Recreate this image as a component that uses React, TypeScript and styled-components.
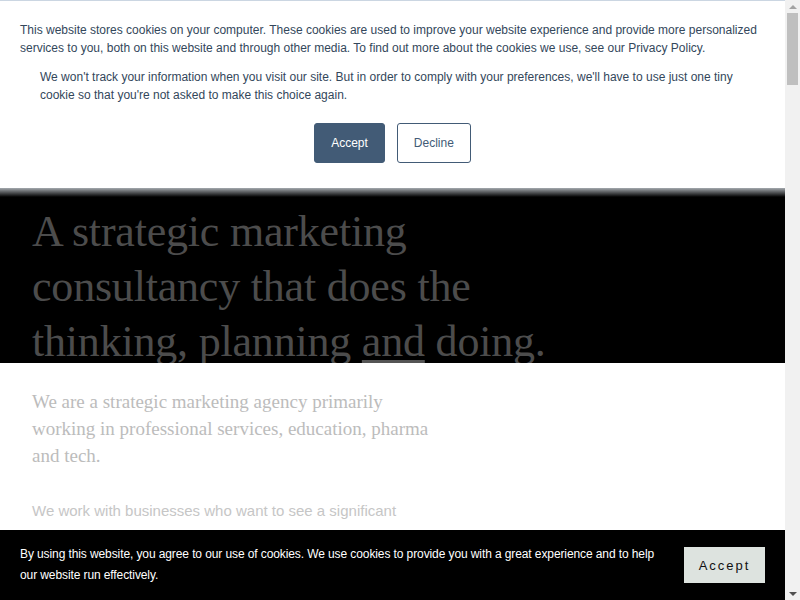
import React from 'react';
import styled, { createGlobalStyle } from 'styled-components';

const GlobalStyle = createGlobalStyle`
  html, body {
    margin: 0;
    padding: 0;
    background: #ffffff;
  }
  * { box-sizing: border-box; }
`;

const Page = styled.main`
  margin-right: 15px;
`;

const Hero = styled.section`
  background: #000;
  height: 363px;
  overflow: hidden;
  padding: 204px 32px 0;
`;

const Headline = styled.h1`
  margin: 0;
  max-width: 560px;
  font-family: 'Liberation Serif', 'Times New Roman', serif;
  font-weight: 400;
  font-size: 44px;
  line-height: 55px;
  color: #4c4c4c;
  letter-spacing: -0.2px;

  u {
    text-decoration: underline;
    text-decoration-thickness: 3px;
    text-underline-offset: 4px;
    text-decoration-color: #555;
  }
`;

const Intro = styled.section`
  padding: 25px 32px 0;
  min-height: 4350px;
`;

const Lead = styled.p`
  margin: 0;
  max-width: 410px;
  font-family: 'Liberation Serif', 'Times New Roman', serif;
  font-size: 19px;
  line-height: 27px;
  color: #bcbcbc;
`;

const Body = styled.p`
  margin: 28px 0 0;
  max-width: 410px;
  font-family: 'Liberation Sans', Arial, sans-serif;
  font-size: 15px;
  line-height: 28px;
  color: #c6c6c6;
`;

const Consent = styled.div`
  position: fixed;
  top: 0;
  left: 0;
  right: 15px;
  background: #fff;
  border-top: 1px solid #cbd6e2;
  padding: 20px 20px 25px;
  font-family: 'Liberation Sans', Arial, sans-serif;
  font-size: 12px;
  line-height: 18px;
  color: #33475b;
  z-index: 10;

  &::after {
    content: '';
    position: absolute;
    left: 0;
    right: 0;
    top: 100%;
    height: 9px;
    background: linear-gradient(#a4a9ae, rgba(0, 0, 0, 0));
  }
`;

const ConsentText = styled.p<{ $indent?: boolean }>`
  margin: ${p => (p.$indent ? '11px 20px 0' : '0')};
`;

const ConsentActions = styled.div`
  display: flex;
  justify-content: center;
  gap: 12px;
  margin-top: 19px;
`;

const ConsentButton = styled.button<{ $primary?: boolean }>`
  height: 40px;
  padding: 0 16px;
  border-radius: 3px;
  border: 1px solid #425b76;
  background: ${p => (p.$primary ? '#425b76' : '#fff')};
  color: ${p => (p.$primary ? '#fff' : '#425b76')};
  font-family: 'Liberation Sans', Arial, sans-serif;
  font-size: 12px;
  cursor: pointer;
`;

const CookieBar = styled.div`
  position: fixed;
  left: 0;
  right: 15px;
  bottom: 0;
  height: 70px;
  background: #000;
  display: flex;
  align-items: center;
  gap: 20px;
  padding: 0 20px;
  z-index: 10;
`;

const CookieText = styled.p`
  flex: 1;
  margin: 0;
  font-family: 'Liberation Sans', Arial, sans-serif;
  font-size: 12px;
  letter-spacing: -0.1px;
  line-height: 21px;
  color: #fff;
`;

const CookieAccept = styled.button`
  width: 81px;
  height: 36px;
  border: none;
  background: #dde3df;
  color: #111;
  font-family: 'Liberation Sans', Arial, sans-serif;
  font-size: 13px;
  letter-spacing: 2px;
  cursor: pointer;
`;

/* fake classic scrollbar, the page in the shot is scrolled to the top */
const Scrollbar = styled.div`
  position: fixed;
  top: 0;
  right: 0;
  width: 15px;
  height: 100vh;
  background: #f1f1f1;
  display: flex;
  flex-direction: column;
  align-items: center;
  z-index: 20;
`;

const Arrow = styled.div<{ $down?: boolean }>`
  height: 13px;
  width: 100%;
  display: flex;
  align-items: center;
  justify-content: center;
  margin-top: ${p => (p.$down ? 'auto' : '0')};
  &::before {
    content: '';
    border-left: 4px solid transparent;
    border-right: 4px solid transparent;
    ${p => (p.$down ? 'border-top: 4px solid #505050;' : 'border-bottom: 4px solid #a3a3a3;')}
  }
`;

const Thumb = styled.div`
  width: 11px;
  height: 72px;
  background: #bfbfbf;
`;

export default function App() {
  return (
    <>
      <GlobalStyle />
      <Page>
        <Hero>
          <Headline>
            A strategic marketing consultancy that does the thinking, planning <u>and</u> doing.
          </Headline>
        </Hero>
        <Intro>
          <Lead>
            We are a strategic marketing agency primarily working in professional services, education, pharma and tech.
          </Lead>
          <Body>
            We work with businesses who want to see a significant difference in how they market themselves.
          </Body>
        </Intro>
      </Page>

      <Consent>
        <ConsentText>
          This website stores cookies on your computer. These cookies are used to improve your website experience and provide more personalized services to you, both on this website and through other media. To find out more about the cookies we use, see our Privacy Policy.
        </ConsentText>
        <ConsentText $indent>
          We won't track your information when you visit our site. But in order to comply with your preferences, we'll have to use just one tiny cookie so that you're not asked to make this choice again.
        </ConsentText>
        <ConsentActions>
          <ConsentButton $primary>Accept</ConsentButton>
          <ConsentButton>Decline</ConsentButton>
        </ConsentActions>
      </Consent>

      <CookieBar>
        <CookieText>
          By using this website, you agree to our use of cookies. We use cookies to provide you with a great experience and to help our website run effectively.
        </CookieText>
        <CookieAccept>Accept</CookieAccept>
      </CookieBar>

      <Scrollbar>
        <Arrow />
        <Thumb />
        <Arrow $down />
      </Scrollbar>
    </>
  );
}
